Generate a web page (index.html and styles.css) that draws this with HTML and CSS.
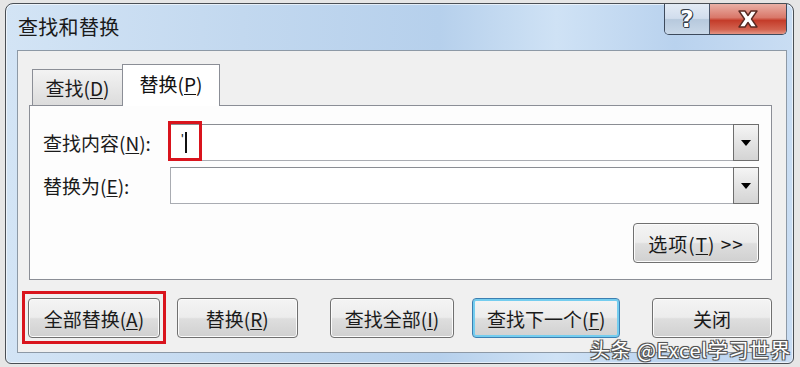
FILE: index.html
```html
<!DOCTYPE html>
<html lang="zh-CN">
<head>
<meta charset="utf-8">
<title>查找和替换</title>
<link rel="stylesheet" href="styles.css">
</head>
<body>
<div class="window">
  <div class="titlebar">
    <div class="title">查找和替换</div>
    <div class="controls">
      <div class="ctl help"><span class="qmark">?</span></div>
      <div class="ctl close">
        <svg width="28" height="20" viewBox="0 0 28 20"><path d="M5 2 L11 2 L14 6.5 L17 2 L23 2 L17.5 10 L23 18 L17 18 L14 13.5 L11 18 L5 18 L10.5 10 Z" fill="#ffffff" stroke="#5a2a22" stroke-width="1.4" stroke-linejoin="round"/></svg>
      </div>
    </div>
  </div>
  <div class="client">
    <div class="tabs">
      <div class="tab inactive">查找(<u>D</u>)</div>
      <div class="tab active">替换(<u>P</u>)</div>
    </div>
    <div class="panel">
      <div class="row">
        <label class="lbl">查找内容(<u>N</u>):</label>
        <div class="combo">
          <div class="field"><span class="quote">'</span><span class="caret"></span></div>
          <div class="drop"><span class="tri"></span></div>
          <div class="hl-box"></div>
        </div>
      </div>
      <div class="row row2">
        <label class="lbl">替换为(<u>E</u>):</label>
        <div class="combo">
          <div class="field"></div>
          <div class="drop"><span class="tri"></span></div>
        </div>
      </div>
      <div class="opt-row">
        <button class="btn opt">选项(<u>T</u>) &gt;&gt;</button>
      </div>
    </div>
    <div class="btnrow">
      <button class="btn b1 hl">全部替换(<u>A</u>)</button>
      <button class="btn b2">替换(<u>R</u>)</button>
      <button class="btn b3">查找全部(<u>I</u>)</button>
      <button class="btn b4 focus">查找下一个(<u>F</u>)</button>
      <button class="btn b5">关闭</button>
    </div>
  </div>
  <div class="watermark">头条 @Excel学习世界</div>
</div>
</body>
</html>
```
FILE: styles.css
```css
* { box-sizing: border-box; }
html, body { margin: 0; padding: 0; }
body {
  width: 800px;
  height: 367px;
  overflow: hidden;
  background: #e6e6e6;
  font-family: "Noto Sans CJK SC", "Noto Sans", sans-serif;
  font-size: 19px;
  color: #111;
  padding: 3px 0 0 5px;
}
u { text-decoration: underline; text-underline-offset: 2px; text-decoration-thickness: 1px; }

.window {
  position: relative;
  width: 789px;
  height: 361px;
  border: 1px solid #4a4f55;
  border-radius: 8px 8px 6px 6px;
  background: linear-gradient(90deg, #d3e4f5 0%, #c2d8ef 30%, #b6d0ec 55%, #cfe2f5 70%, #b9d2ee 85%, #c9ddf3 100%);
  box-shadow: inset 0 0 0 1px rgba(255,255,255,0.6);
}

.titlebar {
  height: 46px;
  display: flex;
  justify-content: space-between;
  align-items: flex-start;
}
.title {
  padding: 8px 0 0 12px;
  font-size: 20px;
  letter-spacing: 0.3px;
  color: #1a1a1a;
}
.controls {
  display: flex;
  margin-right: 6px;
  height: 31px;
  border: 1px solid #3d4a5c;
  border-top: none;
  border-radius: 0 0 5px 5px;
  overflow: hidden;
}
.ctl { height: 30px; display: flex; align-items: center; justify-content: center; }
.help {
  width: 45px;
  background: linear-gradient(#e3ebf5 0%, #d1dded 48%, #b7c9dd 52%, #c9d8e8 100%);
  border-right: 1px solid #4a5568;
}
.qmark {
  font-family: "DejaVu Sans", sans-serif;
  font-weight: bold;
  font-size: 23px;
  color: #fff;
  text-shadow: -1px 0 #333d4a, 1px 0 #333d4a, 0 -1px #333d4a, 0 1px #333d4a, -1px -1px #333d4a, 1px 1px #333d4a;
  line-height: 1;
}
.close {
  width: 76px;
  background: linear-gradient(#eab0a6 0%, #d9786a 45%, #c43c2a 55%, #d2624f 85%, #e49484 100%);
}

.client {
  margin: 0 6px 0 11px;
  height: 303px;
  border: 1px solid #8d99a6;
  background: #f0f0f0;
  padding: 14px 14px 0 11px;
}

.tabs {
  height: 40px;
  display: flex;
  align-items: flex-end;
  padding-left: 3px;
  position: relative;
  z-index: 2;
}
.tab {
  border: 1px solid #8b8e96;
  border-bottom: none;
  display: flex;
  align-items: center;
  justify-content: center;
  font-size: 19px;
}
.tab.inactive {
  width: 90px;
  height: 36px;
  background: linear-gradient(#f3f3f3, #dcdcdc);
  border-right: none;
  color: #1a1a1a;
}
.tab.active {
  width: 98px;
  height: 42px;
  margin-bottom: -1px;
  background: #ffffff;
  padding-bottom: 4px;
}

.panel {
  height: 175px;
  border: 1px solid #8b8e96;
  background: #fdfdfd;
  padding: 18px 12px 0 13px;
}
.row {
  display: flex;
  align-items: center;
  height: 37px;
}
.row2 { margin-top: 6px; }
.lbl {
  width: 127px;
  flex: none;
  font-size: 19px;
  color: #1a1a1a;
}
.combo {
  position: relative;
  flex: 1;
  height: 37px;
  display: flex;
}
.field {
  flex: 1;
  height: 37px;
  border: 1px solid #a9acb2;
  border-top-color: #8a8d93;
  border-right: none;
  background: #fff;
  display: flex;
  align-items: center;
  padding-left: 10px;
}
.quote {
  font-family: "Liberation Sans", sans-serif;
  font-size: 14px;
  line-height: 1;
  margin-top: -8px;
  color: #222;
}
.caret {
  display: inline-block;
  width: 2px;
  height: 21px;
  background: #111;
  margin-left: 1px;
}
.drop {
  width: 26px;
  height: 37px;
  flex: none;
  border: 1px solid #6e6e6e;
  background: linear-gradient(#f5f5f5, #e2e2e2 55%, #d4d4d4);
  display: flex;
  align-items: center;
  justify-content: center;
}
.tri {
  width: 0;
  height: 0;
  border-left: 5px solid transparent;
  border-right: 5px solid transparent;
  border-top: 6px solid #000;
}
.hl-box {
  position: absolute;
  left: -2px;
  top: -3px;
  width: 34px;
  height: 40px;
  border: 3px solid #d9141d;
}

.opt-row {
  display: flex;
  justify-content: flex-end;
  margin-top: 19px;
}

.btn {
  font-family: "Noto Sans CJK SC", "Noto Sans", sans-serif;
  font-size: 19px;
  color: #1a1a1a;
  height: 40px;
  padding: 0;
  border: 1px solid #707070;
  border-radius: 4px;
  background: linear-gradient(#f4f4f4 0%, #ececec 48%, #dedede 52%, #d0d0d0 100%);
  box-shadow: inset 0 0 0 1px #fbfbfb;
  display: flex;
  align-items: center;
  justify-content: center;
}
.opt { width: 126px; letter-spacing: 1px; }

.btnrow {
  display: flex;
  margin: 18px 0 0 -1px;
}
.b1 { width: 132px; }
.b2 { width: 121px; margin-left: 17px; }
.b3 { width: 125px; margin-left: 32px; }
.b4 { width: 148px; margin-left: 18px; }
.b5 { width: 120px; margin-left: 32px; }
.hl { position: relative; overflow: visible; }
.hl::after {
  content: "";
  position: absolute;
  left: -7px;
  top: -8px;
  right: -7px;
  bottom: -7px;
  border: 3px solid #d9141d;
}
.focus {
  border-color: #3c7fb1;
  box-shadow: inset 0 0 0 2px #74cdef;
}

.watermark {
  position: absolute;
  left: 584px;
  top: 331px;
  font-size: 20px;
  color: #ffffff;
  letter-spacing: 0.8px;
  text-shadow: -1px -1px 0 #555, 1px -1px 0 #555, -1px 1px 0 #555, 1px 1px 0 #555, 0 0 2px #333;
  white-space: nowrap;
}
```
